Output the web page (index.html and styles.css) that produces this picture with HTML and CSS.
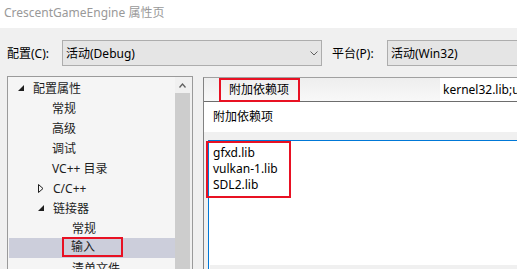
FILE: index.html
```html
<!DOCTYPE html>
<html lang="zh-CN">
<head>
	<meta charset="UTF-8">
	<title>CrescentGameEngine 属性页</title>
	<link rel="stylesheet" href="styles.css">
</head>
<body>
	<div class="window">
		<div class="titlebar">CrescentGameEngine 属性页</div>
		<div class="content">
			<div class="config-row">
				<span class="label">配置(C):</span>
				<div class="combo combo-config">
					<span>活动(Debug)</span>
					<svg class="chevron" width="8" height="5" viewBox="0 0 8 5"><polyline points="0.5,0.5 4,4 7.5,0.5" fill="none" stroke="#606060" stroke-width="1"/></svg>
				</div>
				<span class="label label-platform">平台(P):</span>
				<div class="combo combo-platform"><span>活动(Win32)</span></div>
			</div>
			<div class="panes">
				<div class="tree">
					<ul class="tree-list">
						<li class="node lvl0 has-arrow"><svg class="arrow" width="6" height="6" viewBox="0 0 6 6"><polygon points="6,0 6,6 0,6" fill="#1e1e1e"/></svg>配置属性</li>
						<li class="node lvl1">常规</li>
						<li class="node lvl1">高级</li>
						<li class="node lvl1">调试</li>
						<li class="node lvl1">VC++ 目录</li>
						<li class="node lvl1 has-arrow"><svg class="arrow" width="6" height="9" viewBox="0 0 6 9"><polygon points="0.5,0.5 5,4.5 0.5,8.5" fill="none" stroke="#1e1e1e" stroke-width="1"/></svg>C/C++</li>
						<li class="node lvl1 has-arrow"><svg class="arrow" width="6" height="6" viewBox="0 0 6 6"><polygon points="6,0 6,6 0,6" fill="#1e1e1e"/></svg>链接器</li>
						<li class="node lvl2">常规</li>
						<li class="node lvl2 selected"><span class="mark mark-tree">输入</span></li>
						<li class="node lvl2">清单文件</li>
					</ul>
					<div class="vscroll">
						<div class="vscroll-up">
							<svg width="7" height="5" viewBox="0 0 7 5"><polyline points="0.5,4.5 3.5,1 6.5,4.5" fill="none" stroke="#606060" stroke-width="1.3"/></svg>
						</div>
						<div class="vscroll-thumb"></div>
					</div>
				</div>
				<div class="grid">
					<div class="grid-row">
						<div class="cell-name"><span class="mark mark-head">附加依赖项</span></div>
						<div class="cell-value">kernel32.lib;user32.lib;gdi32.lib</div>
					</div>
					<div class="popup">
						<div class="popup-title">附加依赖项</div>
						<div class="popup-body">
							<div class="edit">
								<div class="edit-text">
									<div class="mark mark-edit">gfxd.lib<br>vulkan-1.lib<br>SDL2.lib</div>
								</div>
								<div class="edit-hscroll"></div>
							</div>
						</div>
					</div>
				</div>
			</div>
		</div>
	</div>
</body>
</html>
```

FILE: styles.css
```css
body {
	margin: 0;
	font-family: "Noto Sans", "Noto Sans CJK SC", sans-serif;
	font-size: 12px;
	color: #000;
	background-color: #f0f0f0;
	overflow: hidden;
}
.window {
	width: 517px;
	height: 269px;
	overflow: hidden;
}
.titlebar {
	height: 28px;
	padding-left: 4px;
	line-height: 26px;
	background-color: #fff;
	color: #999;
	white-space: nowrap;
}
.content {
	padding: 12px 0 0 7px;
}
.config-row {
	display: flex;
	align-items: center;
	height: 26px;
}
.label {
	width: 55px;
	flex: none;
	white-space: nowrap;
}
.label-platform {
	margin-left: 10px;
}
.combo {
	display: flex;
	align-items: center;
	height: 26px;
	box-sizing: border-box;
	padding-left: 3px;
	border: 1px solid #adadad;
	background-color: #e5e5e5;
	white-space: nowrap;
}
.combo-config {
	width: 260px;
	flex: none;
}
.combo-platform {
	flex: 1;
	margin-right: -20px;
}
.chevron {
	margin-left: auto;
	margin-right: 3px;
}
.panes {
	display: flex;
	margin-top: 10px;
	height: 200px;
}
.tree {
	display: flex;
	width: 186px;
	flex: none;
	box-sizing: border-box;
	border: 1px solid #9a9a9a;
	border-bottom: none;
	background-color: #f5f5f5;
	color: #1e1e1e;
}
.tree-list {
	flex: 1;
	list-style: none;
	margin: 0;
	padding: 1px 0 0 0;
}
.node {
	display: flex;
	align-items: center;
	height: 20px;
	margin-left: 1px;
	white-space: nowrap;
}
.lvl0 { padding-left: 24px; }
.lvl1 { padding-left: 43px; }
.lvl2 { padding-left: 63px; }
.has-arrow.lvl0 { padding-left: 9px; }
.has-arrow.lvl1 { padding-left: 29px; }
.arrow {
	margin-right: 9px;
}
.selected {
	background-color: #cccedb;
}
.mark {
	border: 2px solid #e81123;
	box-sizing: border-box;
}
.mark-tree {
	align-self: flex-start;
	height: 20px;
	width: 61px;
	margin-top: -1px;
	margin-left: -10px;
	padding-left: 7px;
	line-height: 16px;
}
.vscroll {
	width: 17px;
	flex: none;
	background-color: #f0f0f0;
}
.vscroll-up {
	display: flex;
	justify-content: center;
	align-items: center;
	height: 16px;
	padding-right: 2px;
}
.vscroll-thumb {
	width: 15px;
	height: 200px;
	background-color: #cdcdcd;
}
.grid {
	flex: 1;
	margin-left: 10px;
	margin-top: 1px;
	border-left: 1px solid #828282;
	border-top: 1px solid #a0a0a0;
	background-color: #fff;
	min-width: 0;
}
.grid-row {
	display: flex;
	height: 23px;
}
.cell-name {
	width: 236px;
	flex: none;
	padding-left: 15px;
	box-sizing: border-box;
	background: linear-gradient(#eeeeee, #f8f8f8);
}
.mark-head {
	position: relative;
	z-index: 1;
	display: block;
	width: 81px;
	height: 24px;
	padding-left: 8px;
	line-height: 20px;
	white-space: nowrap;
}
.cell-value {
	flex: 1;
	padding-left: 3px;
	line-height: 23px;
	white-space: nowrap;
	overflow: hidden;
}
.popup {
	border-top: 1px solid #6d6d6d;
	background-color: #f0f0f0;
}
.popup-title {
	height: 30px;
	padding-left: 9px;
	line-height: 30px;
	background-color: #fff;
}
.popup-body {
	padding: 8px 0 0 4px;
}
.edit {
	display: flex;
	flex-direction: column;
	height: 150px;
	border: 1px solid #0078d7;
	border-right: none;
	background-color: #fff;
}
.edit-text {
	height: 124px;
	flex: none;
}
.mark-edit {
	width: 85px;
	margin-left: -3px;
	padding: 2px 0 3px 5px;
	line-height: 16px;
	white-space: nowrap;
}
.edit-hscroll {
	flex: 1;
	margin-left: 1px;
	background-color: #f0f0f0;
}
```
